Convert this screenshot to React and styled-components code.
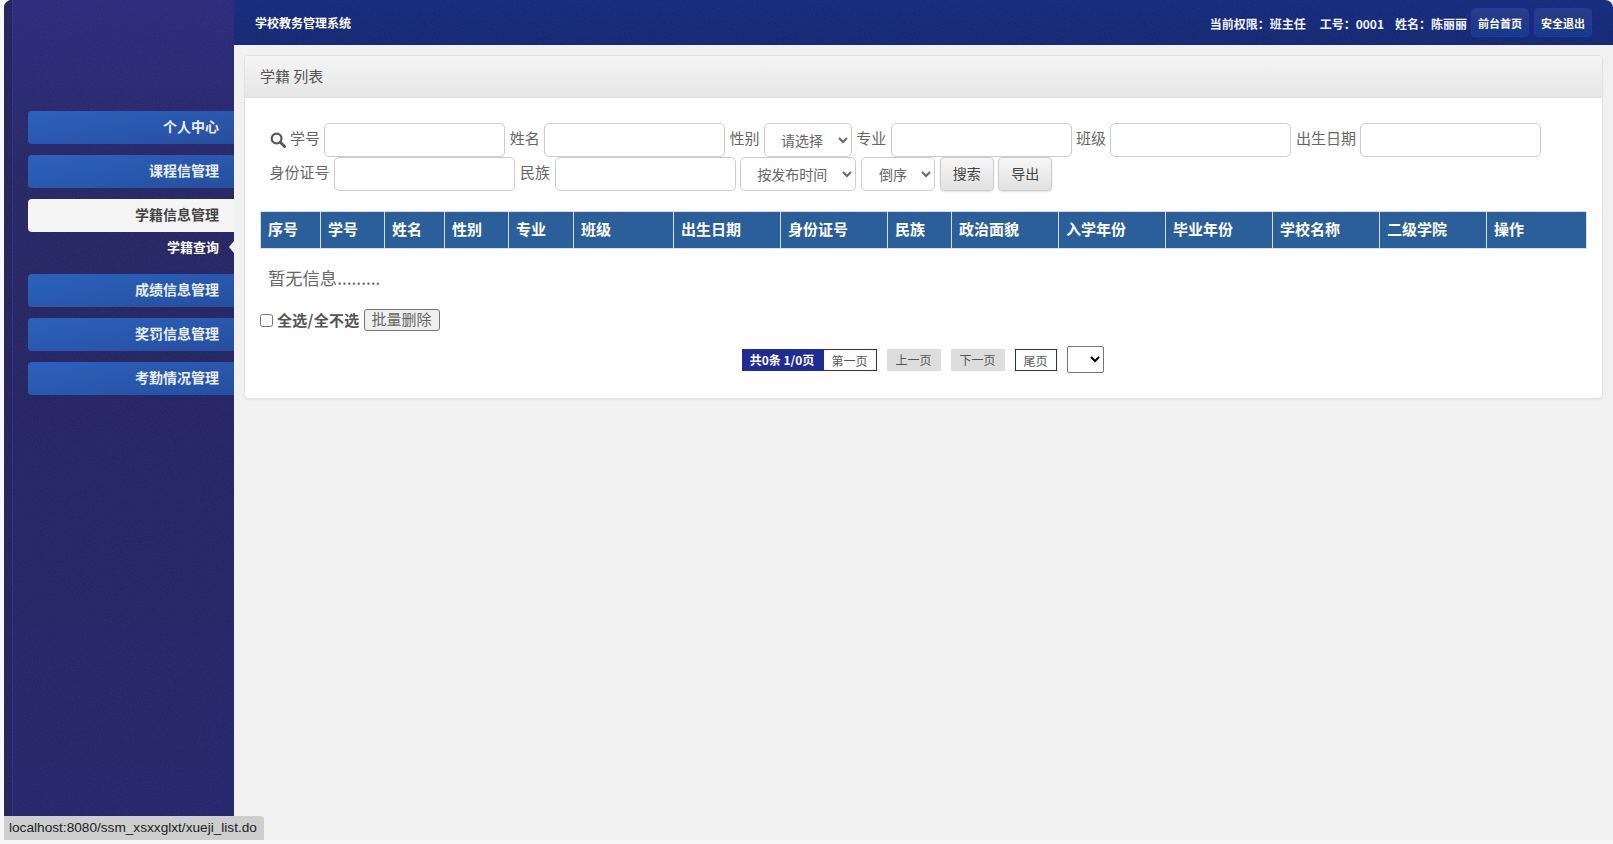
import React from 'react'
import styled, { createGlobalStyle } from 'styled-components'

const menus = [
  { name: '个人中心' },
  { name: '课程信管理' },
  { name: '学籍信息管理', active: true, subs: ['学籍查询'] },
  { name: '成绩信息管理' },
  { name: '奖罚信息管理' },
  { name: '考勤情况管理' },
]

const columns = [
  ['序号', 60], ['学号', 64], ['姓名', 60], ['性别', 64], ['专业', 65],
  ['班级', 100], ['出生日期', 107], ['身份证号', 107], ['民族', 64], ['政治面貌', 107],
  ['入学年份', 107], ['毕业年份', 107], ['学校名称', 107], ['二级学院', 107], ['操作', 100],
]

// fine grain that lies over the dark bars
const noise = `url("data:image/svg+xml,%3Csvg xmlns='http://www.w3.org/2000/svg' width='240' height='240'%3E%3Cfilter id='n'%3E%3CfeTurbulence type='fractalNoise' baseFrequency='0.85' numOctaves='2' stitchTiles='stitch'/%3E%3CfeColorMatrix values='0 0 0 0 1 0 0 0 0 1 0 0 0 0 1 0 0 0 0.07 0'/%3E%3C/filter%3E%3Crect width='240' height='240' filter='url(%23n)'/%3E%3C/svg%3E")`

const App = () => {
  return (
    <>
      <GlobalStyle />
      <Frame>
        <Sidebar>
          {menus.map((m) => (
            <MenuGroup key={m.name}>
              <MenuButton $active={m.active}>{m.name}</MenuButton>
              {m.subs && m.subs.map((s) => <SubItem key={s}>{s}</SubItem>)}
            </MenuGroup>
          ))}
        </Sidebar>
        <Main>
          <Header>
            <Title>学校教务管理系统</Title>
            <UserInfo>
              <InfoText $gap={14}>当前权限：班主任</InfoText>
              <InfoText $gap={11}>工号：0001</InfoText>
              <InfoText $gap={-1}>姓名：陈丽丽</InfoText>
              <HeadButton>前台首页</HeadButton>
              <HeadButton>安全退出</HeadButton>
            </UserInfo>
          </Header>
          <Content>
            <Panel>
              <PanelHead>学籍 列表</PanelHead>
              <PanelBody>
                <SearchRow $gap={4.4}>
                  <SearchIcon viewBox="0 0 16 16">
                    <circle cx="6.6" cy="6.6" r="4.9" fill="none" stroke="#555" strokeWidth="2.2" />
                    <path d="M10.2 10.2 L14.6 14.6" stroke="#555" strokeWidth="2.8" strokeLinecap="round" />
                  </SearchIcon>
                  <FieldLabel>学号</FieldLabel>
                  <TextInput />
                  <FieldLabel>姓名</FieldLabel>
                  <TextInput />
                  <FieldLabel>性别</FieldLabel>
                  <Select $w={88} $pad={12}><option>请选择</option></Select>
                  <FieldLabel>专业</FieldLabel>
                  <TextInput />
                  <FieldLabel>班级</FieldLabel>
                  <TextInput />
                  <FieldLabel>出生日期</FieldLabel>
                  <TextInput />
                </SearchRow>
                <SearchRow $gap={4.7}>
                  <FieldLabel>身份证号</FieldLabel>
                  <TextInput />
                  <FieldLabel>民族</FieldLabel>
                  <TextInput />
                  <Select $w={116} $pad={12}><option>按发布时间</option></Select>
                  <Select $w={74} $pad={13}><option>倒序</option></Select>
                  <ActionButton>搜索</ActionButton>
                  <ActionButton>导出</ActionButton>
                </SearchRow>
                <ListTable>
                  <colgroup>
                    {columns.map(([name, w]) => <col key={name} width={w} />)}
                  </colgroup>
                  <thead>
                    <tr>
                      {columns.map(([name]) => <HeadCell key={name}>{name}</HeadCell>)}
                    </tr>
                  </thead>
                </ListTable>
                <EmptyText>暂无信息.........</EmptyText>
                <BatchRow>
                  <CheckBox type="checkbox" />
                  <CheckLabel>全选/全不选</CheckLabel>
                  <BatchButton>批量删除</BatchButton>
                </BatchRow>
                <Pager>
                  <PageGroup>
                    <PageTotal>共0条 1/0页</PageTotal>
                    <PageLink $w={54}>第一页</PageLink>
                  </PageGroup>
                  <PageLink $w={54} $off>上一页</PageLink>
                  <PageLink $w={54} $off>下一页</PageLink>
                  <PageLink $w={42}>尾页</PageLink>
                  <PageSelect />
                </Pager>
              </PanelBody>
            </Panel>
          </Content>
        </Main>
      </Frame>
      <StatusBar>localhost:8080/ssm_xsxxglxt/xueji_list.do</StatusBar>
    </>
  )
}

const GlobalStyle = createGlobalStyle`
html, body {
  margin: 0;
  height: 100%;
  overflow: hidden;
  background: #f7f7f7;
}
* {
  box-sizing: border-box;
}
body, button, input, select {
  font-family: "Noto Sans CJK SC", "Liberation Sans", sans-serif;
}
`

const Frame = styled.div`
display: flex;
height: 840px;
margin-left: 4px;
border-radius: 8px 8px 0 0;
overflow: hidden;
background: #f1f1f1;
`

const Sidebar = styled.aside`
flex: 0 0 230px;
display: flex;
flex-direction: column;
gap: 11px;
padding: 111px 0 0 24px;
background:
  linear-gradient(90deg, transparent 0, transparent 8px, #34338a 8px, #34338a 9px, transparent 9px),
  ${noise},
  linear-gradient(90deg, #1f1e58 0, #1f1e58 8px, transparent 8px),
  linear-gradient(180deg, #27267a 0, #222261 190px, #212060 420px, #20216a 100%);
`

const MenuGroup = styled.div`
display: flex;
flex-direction: column;
`

const MenuButton = styled.div`
height: 33px;
line-height: 30px;
padding-right: 15px;
text-align: right;
font-size: 14px;
font-weight: 700;
border-radius: 4px 0 0 4px;
color: ${({ $active }) => ($active ? '#444' : '#e8eefa')};
background: ${({ $active }) => ($active ? '#f5f5f5' : 'linear-gradient(170deg, #2c62bd, #254f9f)')};
`

const SubItem = styled.div`
position: relative;
height: 31px;
padding: 0 15px 0 0;
line-height: 30px;
text-align: right;
font-size: 13px;
font-weight: 700;
color: #fff;

&::after {
  content: '';
  position: absolute;
  right: 0;
  top: 9px;
  border: 6px solid transparent;
  border-right: 5px solid #fff;
  border-left: 0;
}
`

const Main = styled.div`
flex: 1;
display: flex;
flex-direction: column;
min-width: 0;
`

const Header = styled.header`
flex: 0 0 45px;
display: flex;
align-items: center;
justify-content: space-between;
padding: 0 21px 0 21px;
color: #fff;
background:
  ${noise},
  linear-gradient(180deg, #11267a, #0f2370);
`

const Title = styled.div`
font-size: 12px;
font-weight: 700;
`

const UserInfo = styled.div`
display: flex;
align-items: center;
`

const InfoText = styled.span`
padding-top: 1px;
font-size: 12px;
font-weight: 700;
margin-right: ${({ $gap }) => $gap}px;
color: #eef2ff;
`

const HeadButton = styled.div`
width: 58px;
height: 29px;
line-height: 28px;
margin-left: 5px;
text-align: center;
font-size: 11px;
font-weight: 700;
color: #fff;
border: 1px solid #2636ac;
border-radius: 4px;
background: linear-gradient(180deg, #2c3c88, #143a8c);
`

const Content = styled.main`
flex: 1;
padding: 10px 10px 0 10px;
`

const Panel = styled.section`
height: 344px;
background: #fff;
border: 1px solid #e2e2e2;
border-radius: 4px;
box-shadow: 0 1px 2px rgba(0,0,0,0.06);
`

const PanelHead = styled.div`
height: 42px;
line-height: 39px;
padding-left: 15px;
font-size: 15px;
color: #555;
border-bottom: 1px solid #dedede;
border-radius: 4px 4px 0 0;
background: linear-gradient(180deg, #f5f5f5, #e6e6e6);
`

const PanelBody = styled.div`
padding: 25px 15px 0 15px;
`

const SearchRow = styled.div`
display: flex;
align-items: center;
gap: ${({ $gap }) => $gap}px;
height: 34px;
padding-left: 9.5px;
`

const SearchIcon = styled.svg`
width: 16px;
height: 16px;
`

const FieldLabel = styled.label`
font-size: 15px;
line-height: 30px;
align-self: flex-start;
color: #666;
`

const TextInput = styled.input`
width: 181px;
height: 34px;
padding: 0 8px;
background: #fff;
border: 1px solid #ccc;
border-radius: 5px;
outline: none;
`

const Select = styled.select`
width: ${({ $w }) => $w}px;
height: 34px;
padding-left: ${({ $pad }) => $pad}px;
font-size: 14px;
color: #666;
background: #fff;
border: 1px solid #ccc;
border-radius: 5px;
outline: none;
`

const ActionButton = styled.button`
width: 54px;
height: 34px;
padding: 0 0 2px;
font-size: 14px;
color: #444;
border: 1px solid #ccc;
border-radius: 4px;
background: linear-gradient(180deg, #f6f6f6, #e2e2e2);
box-shadow: 0 1px 2px rgba(0,0,0,0.12);
`

const ListTable = styled.table`
width: 1326px;
margin-top: 20px;
table-layout: fixed;
border-collapse: collapse;
`

const HeadCell = styled.th`
height: 37px;
padding: 0 0 3px 7px;
text-align: left;
font-size: 15px;
font-weight: 700;
color: #fff;
background: #2b5f99;
border: 1px solid #ddd;
`

const EmptyText = styled.div`
height: 60px;
padding-left: 8px;
line-height: 58px;
font-size: 17.3px;
color: #666;
`

const BatchRow = styled.div`
display: flex;
align-items: center;
height: 22px;
`

const CheckBox = styled.input`
width: 13px;
height: 13px;
margin: 0 4px 0 0;
`

const CheckLabel = styled.span`
padding-bottom: 2px;
font-size: 15px;
font-weight: 700;
letter-spacing: 0.3px;
color: #555;
`

const BatchButton = styled.button`
width: 76px;
height: 22px;
margin-left: 4px;
padding: 0 0 2px;
font-size: 15px;
line-height: 18px;
color: #666;
background: #efefef;
border: 1px solid #767676;
border-radius: 3px;
`

const Pager = styled.div`
display: flex;
align-items: center;
justify-content: center;
gap: 10px;
height: 27px;
margin: 15px 0 0 0;
padding-right: 2px;
`

const PageGroup = styled.div`
display: flex;
`

const PageTotal = styled.span`
width: 81px;
height: 22px;
line-height: 22px;
text-align: center;
font-size: 12px;
font-weight: 700;
color: #fff;
background: #1f2c96;
`

const PageLink = styled.span`
width: ${({ $w }) => $w}px;
height: 22px;
line-height: 21px;
text-align: center;
font-size: 12px;
color: #555;
background: ${({ $off }) => ($off ? '#ddd' : '#fff')};
border: ${({ $off }) => ($off ? '0' : '1px solid #1f2c96')};
`

const PageSelect = styled.select`
width: 37px;
height: 27px;
background: #fff;
border: 1px solid #767676;
border-radius: 2px;
`

const StatusBar = styled.div`
position: fixed;
left: 4px;
bottom: 4px;
height: 24px;
padding: 0 7px 0 5px;
line-height: 24px;
font-family: "Liberation Sans", sans-serif;
font-size: 13.65px;
color: #222;
background: #cecece;
border-radius: 0 4px 0 0;
`

export default App
